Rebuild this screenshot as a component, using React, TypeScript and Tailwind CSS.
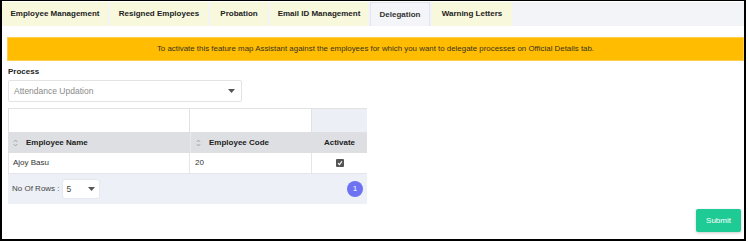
import React from "react";

const tabs = [
  { label: "Employee Management", w: "w-[106px]" },
  { label: "Resigned Employees", w: "w-[98px]" },
  { label: "Probation", w: "w-[58px]" },
  { label: "Email ID Management", w: "w-[98px]" },
  { label: "Delegation", w: "w-[60px]", active: true },
  { label: "Warning Letters", w: "w-[80px]" },
];

function SortIcon() {
  return (
    <svg width="5" height="8" viewBox="0 0 5 8" className="shrink-0">
      <path d="M0.8 3 L2.5 1 L4.2 3" fill="none" stroke="#9a9a9a" strokeWidth="0.8" />
      <path d="M0.8 5 L2.5 7 L4.2 5" fill="none" stroke="#9a9a9a" strokeWidth="0.8" />
    </svg>
  );
}

function Caret() {
  return (
    <svg width="7" height="4" viewBox="0 0 7 4">
      <path d="M0 0 L7 0 L3.5 4 Z" fill="#555" />
    </svg>
  );
}

export default function App() {
  return (
    <div
      className="w-[746px] h-[241px] border-l-2 border-r-2 border-b-2 border-t border-black bg-white text-[8px] text-[#333] overflow-hidden"
      style={{ fontFamily: '"Liberation Sans", Arial, sans-serif' }}
    >
      <div className="flex flex-col pt-[1px]">
        {/* Tabs */}
        <div className="flex h-[24px] bg-[#f3f4f8] gap-[2px]">
          {tabs.map((t) => (
            <div
              key={t.label}
              className={`${t.w} flex items-center justify-center ${
                t.active
                  ? "bg-[#f4f5f8] border-x border-t border-[#e4e5ea] font-semibold text-[#333]"
                  : "bg-[#f8f8dd] font-bold text-[#222]"
              }`}
            >
              {t.label}
            </div>
          ))}
          <div className="flex-1 bg-[#f3f4f8]" />
        </div>

        {/* Banner */}
        <div className="mt-[11px] ml-[5px] h-[24px] bg-[#ffbc00] border border-[#ffcf4a] flex items-center justify-center text-[#3a3320] text-[7.9px]">
          To activate this feature map Assistant against the employees for which you want to delegate processes on Official Details tab.
        </div>

        {/* Process */}
        <div className="ml-[6px] mt-[5px] font-bold text-[#222]">Process</div>
        <div className="ml-[6px] mt-[2px] w-[234px] h-[22px] border border-[#e3e3e3] rounded-[2px] flex items-center justify-between pl-[5px] pr-[6px] text-[#8a8a8a] text-[8.5px]">
          <span>Attendance Updation</span>
          <Caret />
        </div>

        {/* Table */}
        <div className="ml-[6px] mt-[6px] w-[359px] flex flex-col">
          <div className="grid grid-cols-[182px_122px_55px] h-[24px] border-t border-[#e2e2e2]">
            <div className="bg-white border-l border-r border-[#e2e2e2]" />
            <div className="bg-white border-r border-[#e2e2e2]" />
            <div className="bg-[#eceff5]" />
          </div>
          <div className="grid grid-cols-[182px_122px_55px] h-[21px] bg-[#dedfe3] font-bold text-[#222]">
            <div className="flex items-center gap-[8px] pl-[5px]">
              <SortIcon />
              <span>Employee Name</span>
            </div>
            <div className="flex items-center gap-[8px] pl-[5px] border-l border-[#eaeaea]">
              <SortIcon />
              <span>Employee Code</span>
            </div>
            <div className="flex items-center justify-center">Activate</div>
          </div>
          <div className="grid grid-cols-[182px_122px_55px] h-[21px] bg-white border-b border-[#e6e6e6]">
            <div className="flex items-center pl-[4px] border-l border-r border-[#e6e6e6]">Ajoy Basu</div>
            <div className="flex items-center pl-[5px] border-r border-[#e6e6e6]">20</div>
            <div className="flex items-center justify-center">
              <div className="w-[8px] h-[8px] rounded-[1px] bg-[#555] flex items-center justify-center">
                <svg width="6" height="6" viewBox="0 0 6 6">
                  <path d="M1 3.2 L2.4 4.6 L5 1.4" fill="none" stroke="#fff" strokeWidth="1.1" />
                </svg>
              </div>
            </div>
          </div>
          <div className="h-[30px] bg-[#edf0f7] flex items-center justify-between pl-[4px] pr-[4px]">
            <div className="flex items-center gap-[3px] text-[#444]">
              <span>No Of Rows :</span>
              <div className="w-[36px] h-[18px] bg-white rounded-[2px] shadow-[0_0_2px_rgba(0,0,0,0.12)] flex items-center justify-between pl-[4px] pr-[4px] text-[8.5px]">
                <span>5</span>
                <Caret />
              </div>
            </div>
            <div className="w-[16px] h-[16px] rounded-full bg-[#6c72f2] text-white flex items-center justify-center text-[8px]">
              1
            </div>
          </div>
        </div>

        {/* Submit */}
        <div className="flex justify-end mr-[3px] mt-[5px]">
          <div className="w-[45px] h-[23px] bg-[#1ecb95] rounded-[2px] shadow-[0_1px_3px_rgba(0,0,0,0.2)] text-white flex items-center justify-center">
            Submit
          </div>
        </div>
      </div>
    </div>
  );
}
